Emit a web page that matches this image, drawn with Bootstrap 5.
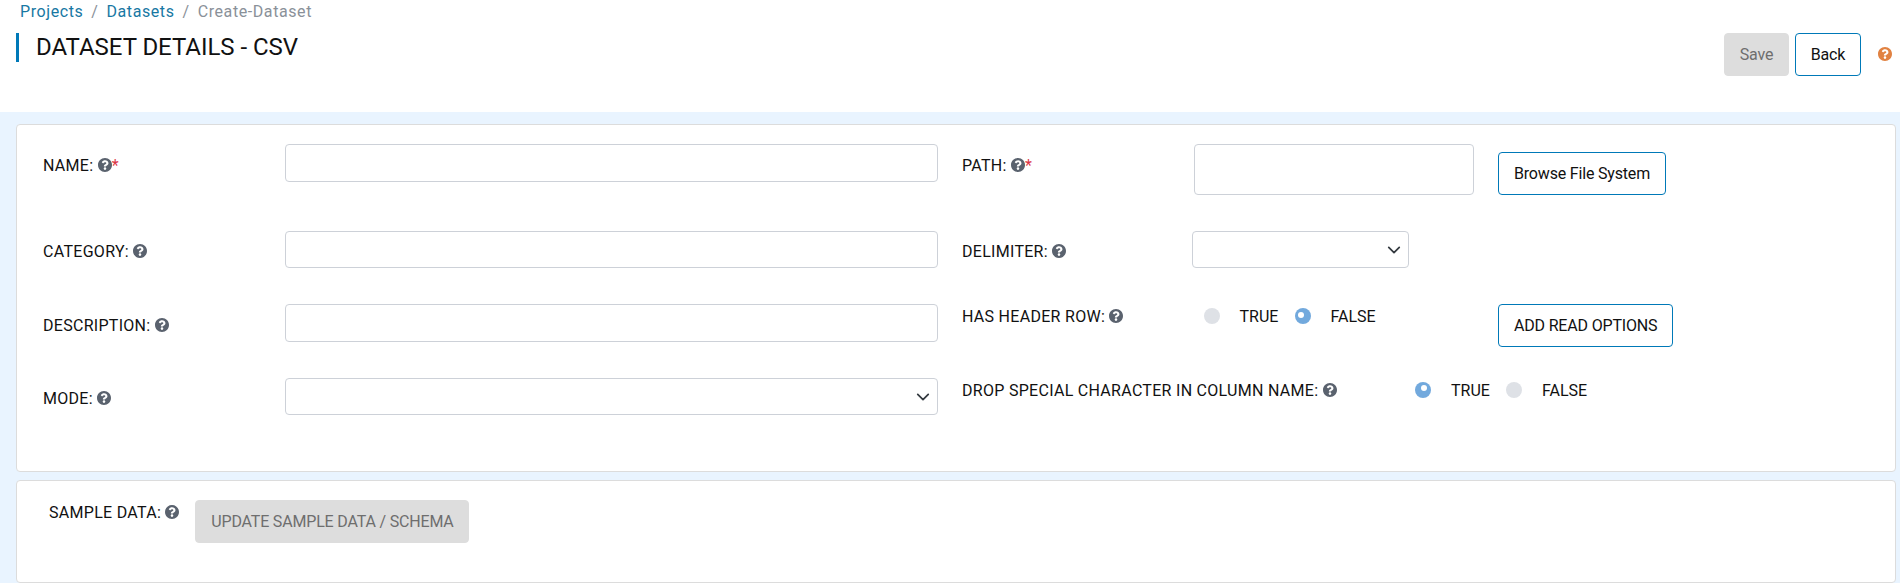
<!DOCTYPE html>
<html lang="en">
<head>
<meta charset="utf-8">
<meta name="viewport" content="width=device-width, initial-scale=1">
<title>Create Dataset</title>
<link rel="stylesheet" href="https://cdn.jsdelivr.net/npm/bootstrap@5.3.0/dist/css/bootstrap.min.css">
<style>
  body { font-family: Roboto, "Liberation Sans", sans-serif; font-size: 16px; line-height: 24px; color: #111; background: #fff; overflow: hidden; }
  .page-head { height: 112px; padding: 0 8px 0 16px; }
  .breadcrumb { --bs-breadcrumb-item-padding-x: 8px; --bs-breadcrumb-divider-color: #8a9199; padding-left: 4px; letter-spacing: .58px; height: 33px; }
  .breadcrumb-item { line-height: 24px; }
  .breadcrumb-item a { color: #1878a3; text-decoration: none; }
  .breadcrumb-item.active { color: #8a9199; }
  .page-title { font-size: 24px; font-weight: 400; line-height: 29px; letter-spacing: -.03px; border-left: 3px solid #0079b8; padding-left: 17px; height: 29px; }
  .btn { --bs-btn-padding-x: 15px; --bs-btn-padding-y: 8.5px; --bs-btn-border-radius: 4px; --bs-btn-line-height: 24px; height: 43px; white-space: nowrap; letter-spacing: -.18px; }
  .btn-line { --bs-btn-color: #111; --bs-btn-border-color: #0079b8; --bs-btn-bg: #fff; }
  .btn-off { --bs-btn-disabled-color: #6e6e6e; --bs-btn-disabled-bg: #ddd; --bs-btn-disabled-border-color: #ddd; --bs-btn-disabled-opacity: 1; }
  .head-actions { gap: 6px; }
  .head-actions .btn { padding-left: 0; padding-right: 0; width: 66px; }
  .head-actions .btn-off { width: 65px; }
  .help { width: 14px; height: 14px; fill: #5a626e; vertical-align: -1px; flex: none; }
  .help-main { fill: #e18242; margin: 0 0 1px 11px; }
  .work-area { background: #e9f4ff; padding: 12px 4px 0 16px; height: 471px; }
  .card { --bs-card-border-color: #dcdcdc; --bs-card-border-radius: 4px; }
  .details { height: 348px; padding: 19px 26px; margin-bottom: 8px; }
  .sample { height: 103px; padding: 19px 32px; }
  .sample .btn { width: 274px; padding-left: 0; padding-right: 0; }
  .field-rows { grid-template-rows: 87px 73px 74px 70px; }
  .left-fields { width: 895px; grid-template-columns: 242px 653px; }
  .right-fields { margin-left: 24px; grid-template-columns: 536px auto; }
  .lab { white-space: nowrap; letter-spacing: .29px; }
  .req { color: #dc3545; }
  .form-control, .form-select { border-color: #cdd1d8; border-radius: 4px; height: 38px; }
  .form-select, .h37 { height: 37px; }
  .form-select { background-position: right 7px center; background-size: 14px 14px; }
  .off-10 { padding-top: 10px; }
  .off-9 { padding-top: 9px; }
  .off-1 { padding-top: 1px; }
  .with-lab { display: grid; grid-template-columns: 230px auto; justify-content: start; }
  .path-input { width: 280px; height: 51px; margin-left: 2px; resize: none; }
  .delimiter { width: 217px; }
  .choices { padding-left: 12px; }
  .with-lab .choices { padding-left: 11.5px; }
  .choice { width: 91px; letter-spacing: 0; }
  .choice > span { padding: 1px 0 0 20px; }
  .drop-label { width: 441px; flex: none; }
  .form-check-input { width: 16px; height: 16px; margin: 4px 0 0; border: 0; background-color: #dee1e6; float: none; flex: none; }
  .form-check-input:checked[type=radio] { background-color: #72a9dd; background-size: 12px 12px; background-position: 0 1px; }
  .form-check-input.dot-right:checked[type=radio] { background-position: 3px 0; }
</style>
</head>
<body>
<svg class="d-none">
  <symbol id="q" viewBox="8 8 496 496"><path d="M504 256c0 137-111 248-248 248S8 393 8 256 119 8 256 8s248 111 248 248zM262.700 90c-54.500 0-89.300 23-116.500 63.800-3.500 5.300-2.400 12.400 2.700 16.300l34.700 26.300c5.200 3.900 12.600 3 16.700-2.100 17.900-22.700 30.100-35.800 57.300-35.800 20.400 0 45.700 13.100 45.700 33 0 15-12.400 22.700-32.500 34C247.100 238.500 216 254.900 216 296v4c0 6.600 5.400 12 12 12h56c6.600 0 12-5.400 12-12v-1.300c0-28.500 83.200-29.600 83.200-106.700 0-58-60.200-102-116.500-102zM256 338c-25.400 0-46 20.600-46 46s20.600 46 46 46 46-20.600 46-46-20.600-46-46-46z"/></symbol>
</svg>

<header class="page-head">
  <nav aria-label="breadcrumb">
    <ol class="breadcrumb mb-0">
      <li class="breadcrumb-item"><a href="#">Projects</a></li>
      <li class="breadcrumb-item"><a href="#">Datasets</a></li>
      <li class="breadcrumb-item active">Create-Dataset</li>
    </ol>
  </nav>
  <div class="d-flex justify-content-between align-items-start">
    <h1 class="page-title mb-0">DATASET DETAILS - CSV</h1>
    <div class="d-flex align-items-center head-actions">
      <button class="btn btn-off" disabled>Save</button>
      <button class="btn btn-line">Back</button>
      <svg class="help help-main"><use href="#q"/></svg>
    </div>
  </div>
</header>

<main class="work-area">
  <section class="card details flex-row">
    <div class="d-grid field-rows left-fields">
      <label class="lab off-10">NAME: <svg class="help"><use href="#q"/></svg><span class="req">*</span></label>
      <input class="form-control">
      <label class="lab off-9">CATEGORY: <svg class="help"><use href="#q"/></svg></label>
      <input class="form-control h37">
      <label class="lab off-10">DESCRIPTION: <svg class="help"><use href="#q"/></svg></label>
      <input class="form-control">
      <label class="lab off-9">MODE: <svg class="help"><use href="#q"/></svg></label>
      <select class="form-select"></select>
    </div>
    <div class="d-grid field-rows right-fields">
      <div class="with-lab">
        <label class="lab off-10">PATH: <svg class="help"><use href="#q"/></svg><span class="req">*</span></label>
        <textarea class="form-control path-input"></textarea>
      </div>
      <div><button class="btn btn-line mt-2">Browse File System</button></div>
      <div class="with-lab">
        <label class="lab off-9">DELIMITER: <svg class="help"><use href="#q"/></svg></label>
        <select class="form-select delimiter"></select>
      </div>
      <div></div>
      <div class="with-lab">
        <label class="lab off-1">HAS HEADER ROW: <svg class="help"><use href="#q"/></svg></label>
        <div class="d-flex choices">
          <label class="d-flex choice"><input class="form-check-input" type="radio" name="header"><span>TRUE</span></label>
          <label class="d-flex choice"><input class="form-check-input" type="radio" name="header" checked><span>FALSE</span></label>
        </div>
      </div>
      <div><button class="btn btn-line">ADD READ OPTIONS</button></div>
      <div class="d-flex">
        <label class="lab off-1 drop-label">DROP SPECIAL CHARACTER IN COLUMN NAME: <svg class="help"><use href="#q"/></svg></label>
        <div class="d-flex choices">
          <label class="d-flex choice"><input class="form-check-input dot-right" type="radio" name="drop" checked><span>TRUE</span></label>
          <label class="d-flex choice"><input class="form-check-input" type="radio" name="drop"><span>FALSE</span></label>
        </div>
      </div>
    </div>
  </section>
  <section class="card sample flex-row align-items-start">
    <label class="lab off-1">SAMPLE DATA: <svg class="help"><use href="#q"/></svg></label>
    <button class="btn btn-off ms-3" disabled>UPDATE SAMPLE DATA / SCHEMA</button>
  </section>
</main>
<script src="https://cdn.jsdelivr.net/npm/bootstrap@5.3.0/dist/js/bootstrap.bundle.min.js"></script>
</body>
</html>
